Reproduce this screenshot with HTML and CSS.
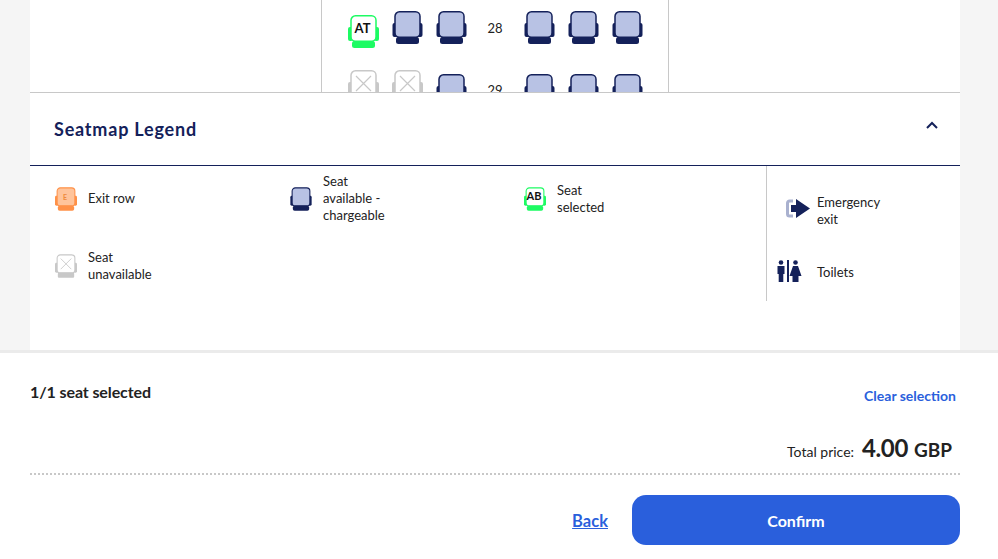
FILE: index.html
```html
<!DOCTYPE html>
<html lang="en">
<head>
    <meta charset="UTF-8">
    <meta name="viewport" content="width=device-width, initial-scale=1.0">
    <title>Seat selection</title>
    <link rel="stylesheet" href="styles.css">
</head>
<body>
    <svg class="defs" width="0" height="0">
        <symbol id="seat-blue" viewBox="0 0 31 33">
            <rect x="0.5" y="12" width="5" height="14" rx="2" fill="#14215a"/>
            <rect x="25.5" y="12" width="5" height="14" rx="2" fill="#14215a"/>
            <rect x="3" y="0.8" width="25" height="25.4" rx="4.5" fill="#b8c2e4" stroke="#14215a" stroke-width="1.5"/>
            <rect x="4" y="26" width="23" height="7" rx="2.5" fill="#14215a"/>
        </symbol>
        <symbol id="seat-green" viewBox="0 0 31 33">
            <rect x="0" y="12" width="5" height="14" rx="2" fill="#1dfb63"/>
            <rect x="26" y="12" width="5" height="14" rx="2" fill="#1dfb63"/>
            <rect x="3" y="0.8" width="25" height="25.4" rx="4.5" fill="#fff" stroke="#1dfb63" stroke-width="1.5"/>
            <rect x="4" y="26" width="23" height="7" rx="2.5" fill="#1dfb63"/>
        </symbol>
        <symbol id="seat-off" viewBox="0 0 31 33">
            <rect x="0" y="12" width="5" height="14" rx="2" fill="#c8c8c8"/>
            <rect x="26" y="12" width="5" height="14" rx="2" fill="#c8c8c8"/>
            <rect x="3" y="0.8" width="25" height="25.4" rx="4.5" fill="#fff" stroke="#c8c8c8" stroke-width="1.5"/>
            <path d="M8 6l15 15M23 6L8 21" stroke="#c8c8c8" stroke-width="1.2" fill="none"/>
            <rect x="4" y="26" width="23" height="7" rx="1.5" fill="#c8c8c8"/>
        </symbol>
        <symbol id="seat-exit" viewBox="0 0 31 33">
            <rect x="0" y="12" width="5" height="14" rx="2" fill="#ff9148"/>
            <rect x="26" y="12" width="5" height="14" rx="2" fill="#ff9148"/>
            <rect x="3" y="0.8" width="25" height="25.4" rx="4.5" fill="#ffc49b" stroke="#ff9148" stroke-width="1.5"/>
            <rect x="4" y="26" width="23" height="7" rx="2.5" fill="#ff9148"/>
        </symbol>
    </svg>

    <div class="card">
        <div class="seatmap">
            <div class="cabin">
                <div class="seat-row first-row">
                    <div class="seat seat-low"><svg><use href="#seat-green"/></svg><span class="seat-label">AT</span></div>
                    <div class="seat"><svg><use href="#seat-blue"/></svg></div>
                    <div class="seat"><svg><use href="#seat-blue"/></svg></div>
                    <div class="row-number">28</div>
                    <div class="seat"><svg><use href="#seat-blue"/></svg></div>
                    <div class="seat"><svg><use href="#seat-blue"/></svg></div>
                    <div class="seat"><svg><use href="#seat-blue"/></svg></div>
                </div>
                <div class="seat-row">
                    <div class="seat"><svg><use href="#seat-off"/></svg></div>
                    <div class="seat"><svg><use href="#seat-off"/></svg></div>
                    <div class="seat seat-low"><svg><use href="#seat-blue"/></svg></div>
                    <div class="row-number row-number-low">29</div>
                    <div class="seat seat-low"><svg><use href="#seat-blue"/></svg></div>
                    <div class="seat seat-low"><svg><use href="#seat-blue"/></svg></div>
                    <div class="seat seat-low"><svg><use href="#seat-blue"/></svg></div>
                </div>
            </div>
        </div>

        <div class="legend-header">
            <h2>Seatmap Legend</h2>
            <svg class="chevron" width="12" height="8" viewBox="0 0 12 8"><path d="M1 7l5-5 5 5" fill="none" stroke="#14215a" stroke-width="2"/></svg>
        </div>

        <div class="legend">
            <div class="legend-seats">
                <div class="legend-item">
                    <div class="legend-icon"><svg><use href="#seat-exit"/></svg><span class="seat-label exit-label">E</span></div>
                    <span class="legend-text">Exit row</span>
                </div>
                <div class="legend-item">
                    <div class="legend-icon"><svg><use href="#seat-blue"/></svg></div>
                    <span class="legend-text">Seat available - chargeable</span>
                </div>
                <div class="legend-item">
                    <div class="legend-icon"><svg><use href="#seat-green"/></svg><span class="seat-label small-label">AB</span></div>
                    <span class="legend-text">Seat selected</span>
                </div>
                <div class="legend-item">
                    <div class="legend-icon"><svg><use href="#seat-off"/></svg></div>
                    <span class="legend-text">Seat unavailable</span>
                </div>
            </div>
            <div class="legend-facilities">
                <div class="facility facility-exit">
                    <svg class="exit-icon" width="24" height="19" viewBox="0 0 24 19">
                        <path d="M7 2H3.500a2 2 0 0 0-2 2v11a2 2 0 0 0 2 2H7" fill="none" stroke="#a9b1cf" stroke-width="3"/>
                        <path d="M5 6h5V0l14 9.500L10 19v-6H5z" fill="#14215a"/>
                    </svg>
                    <span class="legend-text">Emergency exit</span>
                </div>
                <div class="facility facility-toilets">
                    <svg class="toilet-icon" width="25" height="22" viewBox="0 0 25 22">
                        <g fill="#14215a">
                            <circle cx="4" cy="2.500" r="2.300"/>
                            <path d="M0.500 6h7v8H6.300v8H1.700v-8H0.500z"/>
                            <rect x="10" y="0" width="2" height="22"/>
                            <circle cx="18.500" cy="2.500" r="2.300"/>
                            <path d="M16 6h5l3.500 10h-3v6h-6v-6h-3z"/>
                        </g>
                    </svg>
                    <span class="legend-text">Toilets</span>
                </div>
            </div>
        </div>
    </div>

    <div class="footer">
        <div class="summary-row">
            <span class="seat-count">1/1 seat selected</span>
            <a class="clear-link" href="#">Clear selection</a>
        </div>
        <div class="total-row">
            <span class="total-label">Total price:</span>
            <span class="total-amount">4.00</span>
            <span class="total-currency">GBP</span>
        </div>
        <div class="actions">
            <a class="back-link" href="#">Back</a>
            <button class="confirm-btn" type="button">Confirm</button>
        </div>
    </div>
</body>
</html>
```

FILE: styles.css
```css
html, body {
    margin: 0;
    padding: 0;
    height: 559px;
    overflow: hidden;
}
body {
    font-family: 'Lato', 'Liberation Sans', sans-serif;
    background-color: #f5f5f5;
    color: #222;
    display: flex;
    flex-direction: column;
}
.defs {
    position: absolute;
}
.card {
    margin: 0 38px 0 30px;
    height: 350px;
    background-color: #fff;
    flex-shrink: 0;
}
.seatmap {
    height: 92px;
    overflow: hidden;
    display: flex;
    padding-left: 291px;
}
.cabin {
    width: 320px;
    padding: 0 0 0 26px;
    border-left: 1px solid #c8c8c8;
    border-right: 1px solid #c8c8c8;
}
.seat-row {
    display: flex;
    gap: 13px;
    height: 59px;
}
.first-row {
    padding-top: 11px;
}
.seat {
    position: relative;
    width: 31px;
    height: 33px;
    flex-shrink: 0;
}
.seat svg, .legend-icon svg {
    display: block;
    width: 100%;
    height: 100%;
}
.seat-low {
    margin-top: 4px;
}
.seat-label {
    position: absolute;
    left: 0;
    right: 2px;
    top: 5px;
    text-align: center;
    font-size: 13px;
    font-weight: 700;
    line-height: 16px;
    color: #111;
}
.row-number {
    width: 30px;
    padding-right: 1px;
    flex-shrink: 0;
    font-size: 13px;
    line-height: 16px;
    margin-top: 9px;
    text-align: center;
}
.row-number-low {
    margin-top: 12px;
}
.legend-header {
    height: 70px;
    border-top: 1px solid #c8c8c8;
    border-bottom: 1px solid #14215a;
    display: flex;
    align-items: center;
    justify-content: space-between;
    padding: 0 22px 2px 24px;
}
.legend-header h2 {
    margin: 0;
    font-size: 18px;
    font-weight: 700;
    letter-spacing: 0.8px;
    color: #14215a;
    padding-top: 2px;
}
.chevron {
    margin-bottom: 7px;
}
.legend {
    display: flex;
    height: 135px;
}
.legend-seats {
    width: 737px;
    padding-left: 25px;
    box-sizing: border-box;
    display: grid;
    grid-template-columns: 235px 234px 1fr;
    grid-template-rows: 67px 67px;
    border-right: 1px solid #c8c8c8;
    height: 135px;
}
.legend-item {
    display: flex;
    align-items: center;
    padding-bottom: 2px;
}
.legend-icon {
    position: relative;
    width: 22px;
    height: 24px;
    margin-right: 11px;
    flex-shrink: 0;
}
.legend-text {
    font-size: 13px;
    line-height: 17px;
    max-width: 75px;
    color: #222;
}
.small-label {
    top: 2px;
    font-size: 11px;
    line-height: 14px;
}
.exit-label {
    top: 3px;
    font-size: 7px;
    line-height: 14px;
    color: #ee8a3c;
}
.legend-facilities {
    display: flex;
    flex-direction: column;
    padding-left: 10px;
}
.facility {
    display: flex;
    align-items: center;
}
.facility-exit {
    margin-top: 28px;
}
.facility-toilets {
    margin-top: 32px;
}
.exit-icon {
    margin: 0 7px 5px 9px;
}
.toilet-icon {
    margin: 0 15px 2px 0;
}
.footer {
    margin-top: 3px;
    flex: 1;
    background-color: #fff;
    padding: 0 38px 0 30px;
    box-shadow: 0 -3px 0 #ebebeb;
}
.summary-row {
    display: flex;
    justify-content: space-between;
    align-items: flex-start;
    padding: 29px 4px 0 0;
    height: 55px;
}
.seat-count {
    font-size: 16px;
    font-weight: 700;
    line-height: 20px;
    letter-spacing: -0.1px;
    color: #222;
}
.clear-link {
    font-size: 14px;
    font-weight: 700;
    line-height: 20px;
    margin-top: 4px;
    color: #2a5fdc;
    text-decoration: none;
}
.total-row {
    display: flex;
    justify-content: flex-end;
    align-items: baseline;
    height: 36px;
    padding-right: 8px;
    border-bottom: 2px dotted #c8c8c8;
    line-height: 22px;
}
.total-label {
    font-size: 14px;
    margin-right: 8px;
}
.total-amount {
    font-size: 24px;
    font-weight: 700;
    letter-spacing: -0.4px;
    margin-right: 6px;
}
.total-currency {
    font-size: 19px;
    font-weight: 700;
}
.actions {
    display: flex;
    justify-content: flex-end;
    align-items: center;
    margin-top: 20px;
}
.back-link {
    font-size: 16.500px;
    font-weight: 700;
    color: #2a5fdc;
    margin: 2px 24px 0 0;
}
.confirm-btn {
    width: 328px;
    height: 50px;
    background-color: #2a5fdc;
    color: #fff;
    border: none;
    border-radius: 14px;
    font-family: inherit;
    font-size: 16px;
    font-weight: 700;
    cursor: pointer;
}
```
